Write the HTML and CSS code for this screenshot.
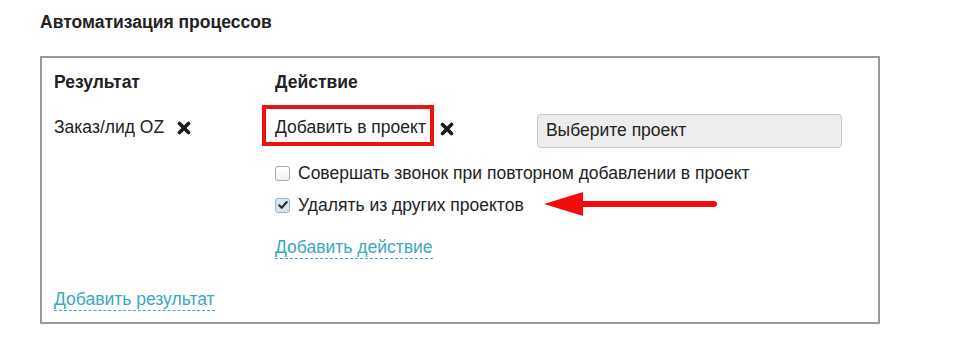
FILE: index.html
```html
<!DOCTYPE html>
<html lang="ru">
<head>
<meta charset="utf-8">
<title>Автоматизация процессов</title>
<link rel="stylesheet" href="styles.css">
</head>
<body>
<div class="page">
  <h2 class="title">Автоматизация процессов</h2>
  <div class="panel">
    <div class="grid">
      <div class="head">Результат</div>
      <div class="head">Действие</div>

      <div class="result">
        <span>Заказ/лид OZ</span>
        <svg class="remove" viewBox="0 0 14 14" width="14" height="14"><path d="M2.5 2.5 L11.5 11.5 M11.5 2.5 L2.5 11.5" stroke="#1a1a1a" stroke-width="3.6" stroke-linecap="round"/></svg>
      </div>
      <div class="action">
        <div class="action-row">
          <span class="action-name">Добавить в проект</span>
          <svg class="remove" viewBox="0 0 14 14" width="14" height="14"><path d="M2.5 2.5 L11.5 11.5 M11.5 2.5 L2.5 11.5" stroke="#1a1a1a" stroke-width="3.6" stroke-linecap="round"/></svg>
          <div class="select">Выберите проект</div>
        </div>
        <label class="check first">
          <span class="box"></span>
          <span>Совершать звонок при повторном добавлении в проект</span>
        </label>
        <label class="check second">
          <span class="box checked">
            <svg viewBox="0 0 12 12" width="12" height="12"><path d="M2.2 6.3 L4.7 8.8 L9.8 3" fill="none" stroke="#2b2b2b" stroke-width="2.1" stroke-linecap="round" stroke-linejoin="round"/></svg>
          </span>
          <span>Удалять из других проектов</span>
          <svg class="arrow" viewBox="0 0 174 26" width="174" height="26"><path d="M36 12 L171 12" stroke="#f20c0c" stroke-width="6" stroke-linecap="round"/><path d="M1 12 L40 0 L40 24 Z" fill="#f20c0c"/></svg>
        </label>
        <a class="link add-action">Добавить действие</a>
      </div>
    </div>
    <a class="link add-result">Добавить результат</a>
  </div>
</div>
</body>
</html>
```
FILE: styles.css
```css
html, body {
  margin: 0;
  padding: 0;
  background: #fff;
}
body {
  font-family: "Liberation Sans", Arial, sans-serif;
  font-size: 17.5px;
  line-height: 22px;
  color: #222;
}
.page {
  padding: 11px 0 0 40px;
}
.title {
  margin: 0;
  font-size: 17.5px;
  font-weight: bold;
  line-height: 22px;
  color: #222;
}
.panel {
  margin-top: 23px;
  width: 836px;
  height: 264px;
  border: 2px solid #9a9a9a;
}
.grid {
  display: grid;
  grid-template-columns: 221px 1fr;
  padding: 13px 0 0 12px;
}
.head {
  font-weight: bold;
}
.result {
  margin-top: 23px;
  display: flex;
  align-items: center;
  align-self: start;
}
.result .remove {
  margin-left: 13px;
  margin-top: 2px;
}
.action {
  margin-top: 21px;
  display: flex;
  flex-direction: column;
}
.action-row {
  display: flex;
  align-items: flex-start;
}
.action-name {
  position: relative;
  margin-top: 2px;
}
.action-name::before {
  content: "";
  position: absolute;
  left: -13px;
  right: -8px;
  top: -11px;
  bottom: -8px;
  border: 4px solid #ee1111;
}
.action-row .remove {
  margin: 8px 0 0 14px;
  flex: none;
}
.select {
  margin-left: 83px;
  width: 305px;
  height: 34px;
  box-sizing: border-box;
  border: 1px solid #c8c8c8;
  border-radius: 4px;
  background: #ededed;
  padding: 4px 0 0 8px;
  color: #222;
}
.check {
  display: flex;
  align-items: center;
  margin-left: 0;
  position: relative;
}
.check.first {
  margin-top: 14px;
}
.check.second {
  margin-top: 10px;
}
.box {
  width: 15px;
  height: 15px;
  margin-right: 8px;
  box-sizing: border-box;
  border: 1px solid #a9a9a9;
  border-radius: 3px;
  background: linear-gradient(#ffffff, #f1f1f1);
  display: flex;
  align-items: center;
  justify-content: center;
  flex: none;
}
.box.checked {
  background: #d6e5f2;
  border-color: #9db7cc;
}
.arrow {
  position: absolute;
  left: 268px;
  top: -2px;
}
.link {
  color: #3aa7c7;
  text-decoration: none;
  border-bottom: 1px dashed #3aa7c7;
  align-self: flex-start;
  line-height: 21px;
}
.add-action {
  margin-top: 21px;
}
.add-result {
  display: inline-block;
  margin: 30px 0 0 12px;
}
```
